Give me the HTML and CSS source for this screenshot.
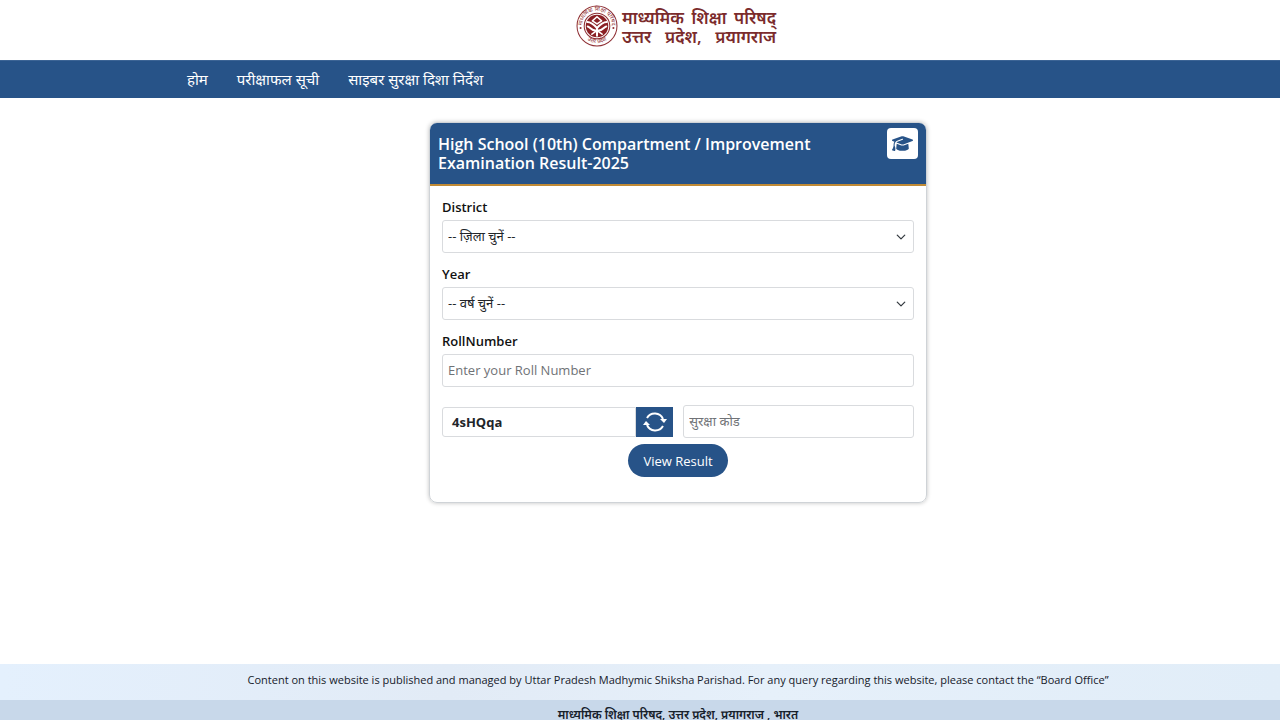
FILE: index.html
```html
<!DOCTYPE html>
<html lang="hi">
<head>
  <meta charset="UTF-8" />
  <meta name="viewport" content="width=device-width, initial-scale=1.0"/>
  <title>High School Compartment / Improvement Result-2025</title>
  <link rel="stylesheet" href="styles.css">
</head>
<body>
  <header class="site-header">
    <a href="#" class="brand">
      <svg class="emblem" viewBox="0 0 82 82" aria-hidden="true">
        <defs>
          <path id="arcTop" d="M13 48 A29 29 0 1 1 69 48"/>
          <path id="arcBottom" d="M13 59 A33 33 0 0 0 69 59"/>
        </defs>
        <circle cx="41" cy="41" r="39" fill="#fff" stroke="#8f3035" stroke-width="2"/>
        <circle cx="41" cy="41" r="25" fill="#fff" stroke="#8f3035" stroke-width="2"/>
        <text class="emblem-text"><textPath href="#arcTop" startOffset="50%" text-anchor="middle">माध्यमिक शिक्षा परिषद</textPath></text>
        <text class="emblem-text"><textPath href="#arcBottom" startOffset="50%" text-anchor="middle">उत्तर प्रदेश</textPath></text>
        <circle cx="9" cy="45" r="2" fill="#8f3035"/>
        <circle cx="73" cy="45" r="2" fill="#8f3035"/>
        <circle cx="41" cy="41" r="22" fill="#8a2025"/>
        <g fill="none" stroke="#fff" stroke-width="4" stroke-linecap="round" stroke-linejoin="round">
          <path d="M41 23 L32 31 L41 37 L50 31 Z" fill="#8a2025" stroke-width="3"/>
          <path d="M22 33 C29 33 36 39 41 45 C46 39 53 33 60 33"/>
          <path d="M23 42 C28 43 30 50 38 50 M59 42 C54 43 52 50 44 50"/>
          <path d="M41 45 V60"/>
          <path d="M31 57 L38 52 M51 57 L44 52" stroke-width="3"/>
        </g>
      </svg>
      <span class="brand-name">
        <span>माध्यमिक शिक्षा परिषद्</span>
        <span>उत्तर प्रदेश, प्रयागराज</span>
      </span>
    </a>
  </header>

  <nav class="navbar">
    <a href="#">होम</a>
    <a href="#">परीक्षाफल सूची</a>
    <a href="#">साइबर सुरक्षा दिशा निर्देश</a>
  </nav>

  <main>
    <div class="card">
      <div class="card-header">
        <h1>High School (10th) Compartment / Improvement Examination Result-2025</h1>
        <span class="card-icon">
          <svg viewBox="0 0 640 512" width="21" height="17" aria-hidden="true">
            <path fill="#275388" d="M320 32c-8 0-16 1-24 4L16 137C6 141 0 150 0 160s6 19 16 23l58 21c-16 25-26 56-26 88v28c0 28-11 58-22 81-7 14-14 27-22 39-4 5-5 11-3 17s7 10 13 12l64 16c4 1 9 0 13-2s6-6 7-10c9-43 4-81-2-109-4-14-8-29-16-43v-28c0-30 10-59 28-82 13-15 29-28 49-36l157-62c8-3 18 1 21 9s-1 18-9 21l-157 62c-12 5-23 12-32 21l159 57c8 3 16 4 24 4s16-1 24-4l280-101c10-4 16-13 16-23s-6-19-16-23L344 36c-8-3-16-4-24-4zM128 408c0 35 86 72 192 72s192-37 192-72l-15-145-142 51c-11 4-23 6-35 6s-24-2-35-6l-142-51z"/>
          </svg>
        </span>
      </div>
      <form class="card-body">
        <label for="district">District</label>
        <select id="district">
          <option>-- ज़िला चुनें --</option>
        </select>
        <label for="year">Year</label>
        <select id="year">
          <option>-- वर्ष चुनें --</option>
        </select>
        <label for="roll">RollNumber</label>
        <input type="text" id="roll" placeholder="Enter your Roll Number" />
        <div class="captcha-row">
          <div class="captcha">
            <span class="captcha-code">4sHQqa</span>
            <button type="button" class="refresh" aria-label="Refresh code">
              <svg viewBox="0 0 24 22" width="24" height="22" fill="none" stroke="#fff" stroke-width="2" aria-hidden="true">
                <path d="M4 7 A9 9 0 0 1 20 8"/>
                <path d="M20 15 A9 9 0 0 1 4 14"/>
                <path d="M17 8 H24 L21 12 Z" fill="#fff" stroke="none"/>
                <path d="M0 14 H7 L3 10 Z" fill="#fff" stroke="none"/>
              </svg>
            </button>
          </div>
          <input type="text" id="captcha" placeholder="सुरक्षा कोड" aria-label="सुरक्षा कोड" />
        </div>
        <button type="submit" class="submit">View Result</button>
      </form>
    </div>
  </main>

  <footer>
    <p class="footer-note">Content on this website is published and managed by Uttar Pradesh Madhymic Shiksha Parishad. For any query regarding this website, please contact the “Board Office”</p>
    <p class="footer-address">माध्यमिक शिक्षा परिषद्, उत्तर प्रदेश, प्रयागराज , भारत</p>
  </footer>
</body>
</html>
```
FILE: styles.css
```css
:root {
  --blue: #275388;
  --line: #d9dbde;
  --shift: 76px;
}

* {
  box-sizing: border-box;
}

body {
  margin: 0;
  height: 100vh;
  min-height: 560px;
  display: flex;
  flex-direction: column;
  overflow: hidden;
  font-family: "Open Sans", "Noto Sans Devanagari", "Noto Sans", sans-serif;
  font-size: 13px;
  color: #212529;
  background: #fff;
}

.site-header {
  display: flex;
  justify-content: center;
  height: 60px;
  padding: 5px 0 0 72px;
}

.brand {
  display: flex;
  gap: 4px;
  height: 42px;
  text-decoration: none;
}

.emblem {
  width: 42px;
  height: 42px;
}

.emblem-text {
  font-size: 11px;
  fill: #8f3035;
}

.brand-name {
  display: flex;
  flex-direction: column;
  width: 154px;
  padding-top: 3px;
  font-size: 17px;
  font-weight: 600;
  line-height: 19px;
  color: #7b2b2c;
  white-space: nowrap;
}

.brand-name span {
  text-align-last: justify;
}

.navbar {
  display: flex;
  gap: 29px;
  padding-left: 187px;
  background: var(--blue);
  border-top: 1px solid #3c6495;
}

.navbar a {
  color: #fff;
  font-size: 15px;
  line-height: 37px;
  text-decoration: none;
}

main {
  flex: 1;
  padding: 24px 0 0 var(--shift);
}

.card {
  max-width: 498px;
  margin: 0 auto;
  border: 1px solid #cfd3d7;
  border-radius: 8px;
  box-shadow: 0 0 4px rgba(0, 0, 0, 0.25);
}

.card-header {
  display: flex;
  justify-content: space-between;
  align-items: flex-start;
  height: 63px;
  padding: 5px 8px;
  background: var(--blue);
  border-bottom: 2px solid #c08a35;
  border-radius: 7px 7px 0 0;
}

.card-header h1 {
  max-width: 400px;
  margin: 7px 0 0;
  font-size: 16px;
  font-weight: 600;
  line-height: 19px;
  color: #fff;
}

.card-icon {
  display: flex;
  align-items: center;
  justify-content: center;
  width: 31px;
  height: 31px;
  background: #fff;
  border-radius: 4px;
}

.card-body {
  display: flex;
  flex-direction: column;
  padding: 12px 12px 25px;
}

label {
  margin-bottom: 4px;
  font-weight: 600;
  line-height: 18px;
  color: #111;
}

select,
input {
  width: 100%;
  height: 33px;
  margin-bottom: 12px;
  padding: 0 5px 2px;
  font: inherit;
  color: #212529;
  background: #fff;
  border: 1px solid var(--line);
  border-radius: 3px;
}

select {
  appearance: none;
  background: #fff url("data:image/svg+xml,%3Csvg xmlns='http://www.w3.org/2000/svg' viewBox='0 0 16 16'%3E%3Cpath fill='none' stroke='%23343a40' stroke-linecap='round' stroke-linejoin='round' stroke-width='2' d='m2 5 6 6 6-6'/%3E%3C/svg%3E") no-repeat right 7px center / 10px 10px;
}

input::placeholder {
  color: #6f7276;
  opacity: 1;
}

.captcha-row {
  display: flex;
  align-items: center;
  gap: 10px;
  margin: 6px 0;
}

.captcha-row input {
  flex: 1;
  min-width: 0;
  margin: 0;
}

.captcha {
  display: flex;
  width: 49%;
  height: 30px;
}

.captcha-code {
  flex: 1;
  padding-left: 9px;
  font-weight: 700;
  line-height: 28px;
  border: 1px solid var(--line);
  border-radius: 3px 0 0 3px;
}

.refresh {
  display: flex;
  align-items: center;
  justify-content: center;
  width: 37px;
  padding: 0;
  background: var(--blue);
  border: 0;
}

.submit {
  align-self: center;
  height: 33px;
  padding: 0 15px;
  font: inherit;
  color: #fff;
  background: var(--blue);
  border: 0;
  border-radius: 17px;
}

footer p {
  margin: 0;
  padding-left: var(--shift);
  text-align: center;
}

.footer-note {
  height: 36px;
  font-size: 11px;
  line-height: 32px;
  color: #16202a;
  background: linear-gradient(90deg, #e4f0fd, #e2ebf6 35%, #e6f0fa 60%, #e1edf8);
}

.footer-address {
  height: 20px;
  font-size: 12px;
  font-weight: 600;
  line-height: 29px;
  color: #16202a;
  background: #c8d8ea;
}
```
